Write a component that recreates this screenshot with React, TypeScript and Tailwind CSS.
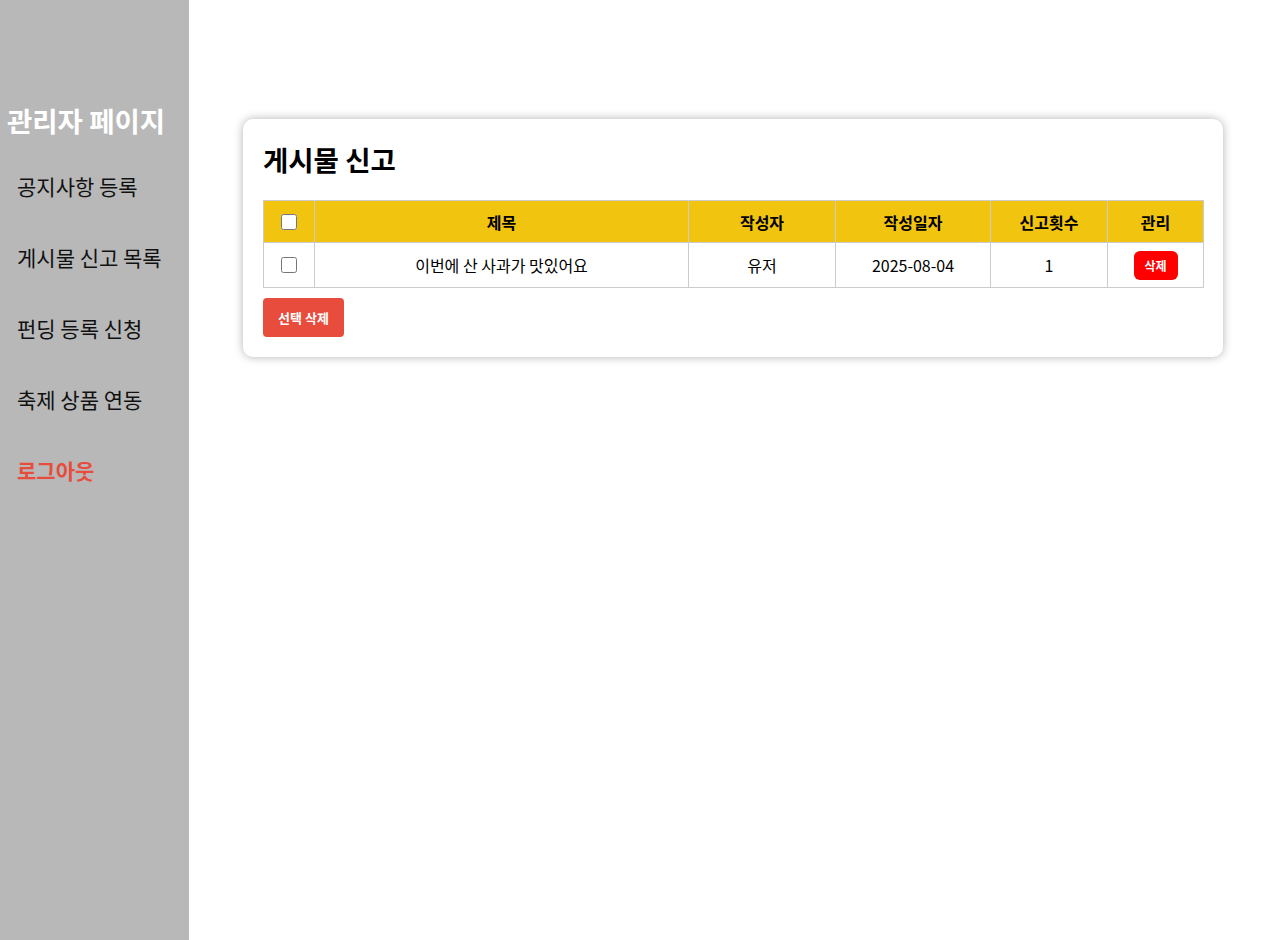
import React from "react";

export default function App() {
  const menu = ["공지사항 등록", "게시물 신고 목록", "펀딩 등록 신청", "축제 상품 연동"];
  return (
    <div className="flex min-h-[940px] w-full bg-white text-black font-['Noto_Sans_CJK_KR','Noto_Sans',sans-serif]">
      <aside className="w-[189px] shrink-0 bg-[#b8b8b8] pt-[100px]">
        <h2 className="h-[40px] pl-[7px] text-[27.5px] font-bold leading-[40px] text-white whitespace-nowrap">관리자 페이지</h2>
        <nav className="mt-[11px] flex flex-col">
          {menu.map((m) => (
            <div key={m} className="flex h-[71px] items-center pl-[17px] text-[21px] text-[#111]">
              {m}
            </div>
          ))}
          <div className="flex h-[71px] items-center pl-[17px] text-[21px] font-bold text-[#e74c3c]">로그아웃</div>
        </nav>
      </aside>
      <main className="flex-1 pl-[54px] pr-[39px] pt-[119px]">
        <div className="w-[980px] rounded-[10px] bg-white px-[20px] pb-[20px] pt-[20px] shadow-[0_0_10px_rgba(0,0,0,0.3)]">
          <h1 className="mb-[20px] h-[41px] text-[27.5px] font-bold leading-[41px]">게시물 신고</h1>
          <table className="w-[940px] table-fixed border-collapse text-[16px] leading-[22px]">
            <colgroup>
              <col className="w-[51px]" />
              <col className="w-[374px]" />
              <col className="w-[147px]" />
              <col className="w-[155px]" />
              <col className="w-[117px]" />
              <col className="w-[96px]" />
            </colgroup>
            <thead>
              <tr className="h-[42px] bg-[#f1c40f]">
                <th className="border border-[#cccccc] p-0 align-middle">
                  <input type="checkbox" className="mx-auto block h-[16px] w-[16px]" />
                </th>
                <th className="border border-[#cccccc] font-bold">제목</th>
                <th className="border border-[#cccccc] font-bold">작성자</th>
                <th className="border border-[#cccccc] font-bold">작성일자</th>
                <th className="border border-[#cccccc] font-bold">신고횟수</th>
                <th className="border border-[#cccccc] font-bold">관리</th>
              </tr>
            </thead>
            <tbody>
              <tr className="h-[45px]">
                <td className="border border-[#cccccc] p-0 align-middle">
                  <input type="checkbox" className="mx-auto block h-[16px] w-[16px]" />
                </td>
                <td className="border border-[#cccccc] text-center align-middle">이번에 산 사과가 맛있어요</td>
                <td className="border border-[#cccccc] text-center align-middle">유저</td>
                <td className="border border-[#cccccc] text-center align-middle">2025-08-04</td>
                <td className="border border-[#cccccc] text-center align-middle">1</td>
                <td className="border border-[#cccccc] p-0 text-center align-middle">
                  <button className="mx-auto block h-[29px] w-[44px] rounded-[6px] bg-[#ff0000] text-[12px] font-bold leading-[29px] text-white">삭제</button>
                </td>
              </tr>
            </tbody>
          </table>
          <button className="mt-[10px] h-[39px] w-[81px] rounded-[4px] bg-[#e74c3c] text-[13px] font-bold text-white">선택 삭제</button>
        </div>
      </main>
    </div>
  );
}
